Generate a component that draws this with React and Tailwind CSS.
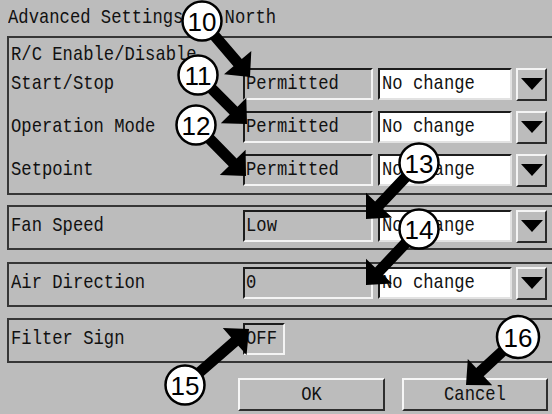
import React from 'react';

const T = ({ children }) => (
  <span className="inline-block scale-y-[1.18] whitespace-pre">{children}</span>
);

function Sunken({ w, children }) {
  return (
    <div
      className={`h-8 ${w} flex items-center pl-[1px] border-2 border-t-[#1c1c1c] border-l-[#1c1c1c] border-b-[#f4f4f4] border-r-[#f4f4f4] overflow-hidden shrink-0`}
    >
      <T>{children}</T>
    </div>
  );
}

function Combo() {
  return (
    <>
      <div className="ml-[5px] w-[134px] h-8 shrink-0 bg-white flex items-center pl-[2px] border-2 border-t-[#1c1c1c] border-l-[#1c1c1c] border-b-[#e2e2e2] border-r-[#e2e2e2]">
        <T>No change</T>
      </div>
      <div className="ml-[4px] w-[31px] h-[33px] shrink-0 flex items-center justify-center border-2 border-t-[#f4f4f4] border-l-[#f4f4f4] border-b-[#2a2a2a] border-r-[#2a2a2a]">
        <svg width="22" height="12" viewBox="0 0 22 12">
          <polygon points="0,0 22,0 11,12" fill="#000" />
        </svg>
      </div>
    </>
  );
}

function Row({ label, value, combo = true, w = 'w-[130px]', h = 'h-8' }) {
  return (
    <div className={`flex items-center ${h}`}>
      <div className="w-[234px] shrink-0 pl-[2px]">
        <T>{label}</T>
      </div>
      <Sunken w={w}>{value}</Sunken>
      {combo && <Combo />}
    </div>
  );
}

function arrowPoly([cx, cy], [tx, ty], shaft = 11, headLen = 19, headHalf = 18) {
  const dx = tx - cx;
  const dy = ty - cy;
  const len = Math.hypot(dx, dy);
  const ux = dx / len;
  const uy = dy / len;
  const px = -uy;
  const py = ux;
  const bx = tx - ux * headLen;
  const by = ty - uy * headLen;
  const s = shaft / 2;
  const pts = [
    [cx + px * s, cy + py * s],
    [bx + px * s, by + py * s],
    [bx + px * headHalf, by + py * headHalf],
    [tx, ty],
    [bx - px * headHalf, by - py * headHalf],
    [bx - px * s, by - py * s],
    [cx - px * s, cy - py * s],
  ];
  return pts.map((p) => p.map((v) => v.toFixed(1)).join(',')).join(' ');
}

const callouts = [
  { n: '10', c: [202, 21], t: [250, 77], r: 19.5 },
  { n: '11', c: [198, 75], t: [247, 124], r: 19.5 },
  { n: '12', c: [196, 125], t: [246, 176], r: 19.5 },
  { n: '13', c: [419, 163], t: [366, 219], r: 19.5 },
  { n: '14', c: [419, 229], t: [366, 285], r: 19.5 },
  { n: '15', c: [185, 385], t: [249, 329], r: 19.5 },
  { n: '16', c: [518, 337], t: [466, 385], r: 21 },
];

export default function App() {
  return (
    <div className="relative w-[552px] h-[414px] overflow-hidden bg-[#bcbcbc] text-[#111] text-[17.2px] leading-[20px] font-['Liberation_Mono',monospace]">
      <div className="h-9 pl-[8px] pt-[8px]">
        <T>Advanced Settings of North</T>
      </div>

      <div className="ml-[7px] w-[547px] border-2 border-[#363636] pb-[7px]">
        <div className="h-[30px] pt-[7px] pl-[2px]">
          <T>R/C Enable/Disable</T>
        </div>
        <div className="flex flex-col gap-[11px]">
          <Row label="Start/Stop" value="Permitted" />
          <Row label="Operation Mode" value="Permitted" />
          <Row label="Setpoint" value="Permitted" />
        </div>
      </div>

      <div className="mt-[10px] ml-[7px] w-[547px] border-2 border-[#363636] pt-[3px] pb-[6px]">
        <Row label="Fan Speed" value="Low" />
      </div>

      <div className="mt-[12px] ml-[7px] w-[547px] border-2 border-[#363636] pt-[3px] pb-[6px]">
        <Row label="Air Direction" value="0" />
      </div>

      <div className="mt-[11px] ml-[7px] w-[547px] border-2 border-[#363636] pt-[2px] pb-[6px]">
        <Row label="Filter Sign" value="OFF" combo={false} w="w-[42px]" h="h-[33px]" />
      </div>

      <div className="mt-[15px] pl-[238px] flex gap-[17px]">
        <div className="w-[147px] h-[33px] flex items-center justify-center border-2 border-t-[#f6f6f6] border-l-[#f6f6f6] border-b-[#2e2e2e] border-r-[#2e2e2e]">
          <T>OK</T>
        </div>
        <div className="w-[146px] h-[33px] flex items-center justify-center border-2 border-t-[#f6f6f6] border-l-[#f6f6f6] border-b-[#2e2e2e] border-r-[#2e2e2e]">
          <T>Cancel</T>
        </div>
      </div>

      <svg
        className="absolute inset-0 pointer-events-none"
        width="552"
        height="414"
        viewBox="0 0 552 414"
      >
        {callouts.map((a) => (
          <polygon key={'a' + a.n} points={arrowPoly(a.c, a.t)} fill="#000" />
        ))}
        {callouts.map((a) => (
          <g key={'c' + a.n}>
            <circle cx={a.c[0]} cy={a.c[1]} r={a.r} fill="#fff" stroke="#000" strokeWidth="2.5" />
            <text
              x={a.c[0]}
              y={a.c[1] + 9.5}
              textAnchor="middle"
              fontFamily="'Liberation Sans', Arial, sans-serif"
              fontSize="26"
              fill="#000"
            >
              {a.n}
            </text>
          </g>
        ))}
      </svg>
    </div>
  );
}
